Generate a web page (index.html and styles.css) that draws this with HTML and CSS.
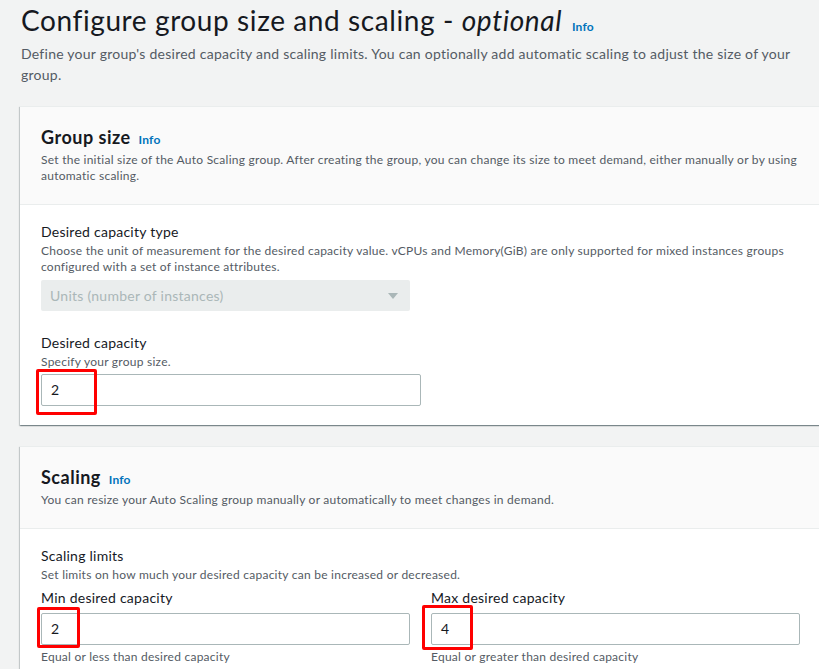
FILE: index.html
```html
<!DOCTYPE html>
<html lang="en">
<head>
<meta charset="utf-8">
<title>Configure group size and scaling</title>
<link rel="stylesheet" href="styles.css">
</head>
<body>
<div class="page">
  <h1 class="title">Configure group size and scaling - <em>optional</em> <a class="info info-title">Info</a></h1>
  <p class="lead">Define your group's desired capacity and scaling limits. You can optionally add automatic scaling to adjust the size of your group.</p>

  <section class="card">
    <div class="card-head">
      <h2 class="card-title">Group size <a class="info">Info</a></h2>
      <p class="card-desc">Set the initial size of the Auto Scaling group. After creating the group, you can change its size to meet demand, either manually or by using automatic scaling.</p>
    </div>
    <div class="card-body">
      <div class="field">
        <div class="label">Desired capacity type</div>
        <div class="desc">Choose the unit of measurement for the desired capacity value. vCPUs and Memory(GiB) are only supported for mixed instances groups configured with a set of instance attributes.</div>
        <div class="select">
          <span>Units (number of instances)</span>
          <svg class="caret" width="12" height="8" viewBox="0 0 12 8"><path d="M1 1h10L6 7z" fill="#aab7b8"/></svg>
        </div>
      </div>
      <div class="field field-gap">
        <div class="label">Desired capacity</div>
        <div class="desc">Specify your group size.</div>
        <div class="input-wrap input-wide">
          <div class="input">2</div>
          <span class="mark mark-a"></span>
        </div>
      </div>
    </div>
  </section>

  <section class="card">
    <div class="card-head">
      <h2 class="card-title">Scaling <a class="info">Info</a></h2>
      <p class="card-desc">You can resize your Auto Scaling group manually or automatically to meet changes in demand.</p>
    </div>
    <div class="card-body">
      <div class="label">Scaling limits</div>
      <div class="desc">Set limits on how much your desired capacity can be increased or decreased.</div>
      <div class="cols">
        <div class="col">
          <div class="label">Min desired capacity</div>
          <div class="input-wrap">
            <div class="input">2</div>
            <span class="mark mark-b"></span>
          </div>
          <div class="desc help">Equal or less than desired capacity</div>
        </div>
        <div class="col">
          <div class="label">Max desired capacity</div>
          <div class="input-wrap">
            <div class="input">4</div>
            <span class="mark mark-c"></span>
          </div>
          <div class="desc help">Equal or greater than desired capacity</div>
        </div>
      </div>
    </div>
  </section>
</div>
</body>
</html>
```

FILE: styles.css
```css
* { box-sizing: border-box; }
html, body { margin: 0; padding: 0; }
body {
  background: #f2f3f3;
  font-family: Lato, "Liberation Sans", sans-serif;
  color: #16191f;
  overflow: hidden;
  width: 819px;
  height: 669px;
  letter-spacing: 0.25px;
}
.page {
  padding: 2px 0 0 20px;
}
.title {
  margin: 0 0 0 1px;
  font-size: 28px;
  line-height: 36px;
  font-weight: 400;
  color: #16191f;
  white-space: nowrap;
  letter-spacing: 0.6px;
}
.title em { font-style: italic; }
.info {
  color: #0073bb;
  font-size: 12px;
  line-height: 1;
  font-weight: 700;
  margin-left: 4px;
  text-decoration: none;
  letter-spacing: 0.2px;
}
.info-title { margin-left: 2px; }
.lead {
  margin: 5px 0 0 1px;
  font-size: 14px;
  line-height: 21px;
  color: #545b64;
  width: 790px;
}
.card {
  margin-top: 21px;
  width: 801px;
  background: #fff;
  border-top: 1px solid #eaeded;
  box-shadow: 0 1px 1px 0 rgba(0,28,36,.3), 1px 1px 1px 0 rgba(0,28,36,.15), -1px 1px 1px 0 rgba(0,28,36,.15);
}
.card + .card { margin-top: 21px; }
.card-head {
  background: #fafafa;
  padding: 19px 20px 20px 21px;
  border-bottom: 1px solid #eaeded;
}
.card-title {
  margin: 0;
  font-size: 18px;
  line-height: 22px;
  font-weight: 700;
  letter-spacing: 0.5px;
}
.card-title .info { margin-left: 3px; }
.card-desc {
  margin: 4px 0 0;
  font-size: 12px;
  line-height: 16px;
  color: #545b64;
}
.card-body {
  padding: 16px 20px 19px 21px;
}
.label {
  font-size: 14px;
  line-height: 22px;
  color: #16191f;
}
.desc {
  font-size: 12px;
  line-height: 16px;
  color: #545b64;
}
.field-gap { margin-top: 21px; }
.select {
  margin-top: 5px;
  width: 369px;
  height: 31px;
  background: #eaeded;
  border-radius: 2px;
  display: flex;
  align-items: center;
  justify-content: space-between;
  padding: 0 11px 0 9px;
  font-size: 14px;
  color: #aab7b8;
}
.input-wrap {
  position: relative;
  margin-top: 4px;
}
.input-wide { width: 380px; }
.input {
  height: 32px;
  border: 1px solid #aab7b8;
  border-radius: 2px;
  background: #fff;
  padding: 0 9px;
  font-size: 14px;
  line-height: 30px;
  color: #16191f;
}
.mark {
  position: absolute;
  border: 3px solid #ff0000;
  border-radius: 2px;
}
.mark-a { left: -5px; top: -5px; width: 61px; height: 46px; }
.mark-b { left: -4px; top: -6px; width: 43px; height: 41px; }
.mark-c { left: -9px; top: -8px; width: 51px; height: 45px; }
.cols {
  display: grid;
  grid-template-columns: 369px 369px;
  column-gap: 21px;
  margin-top: 4px;
}
.help { margin-top: 4px; }
```
